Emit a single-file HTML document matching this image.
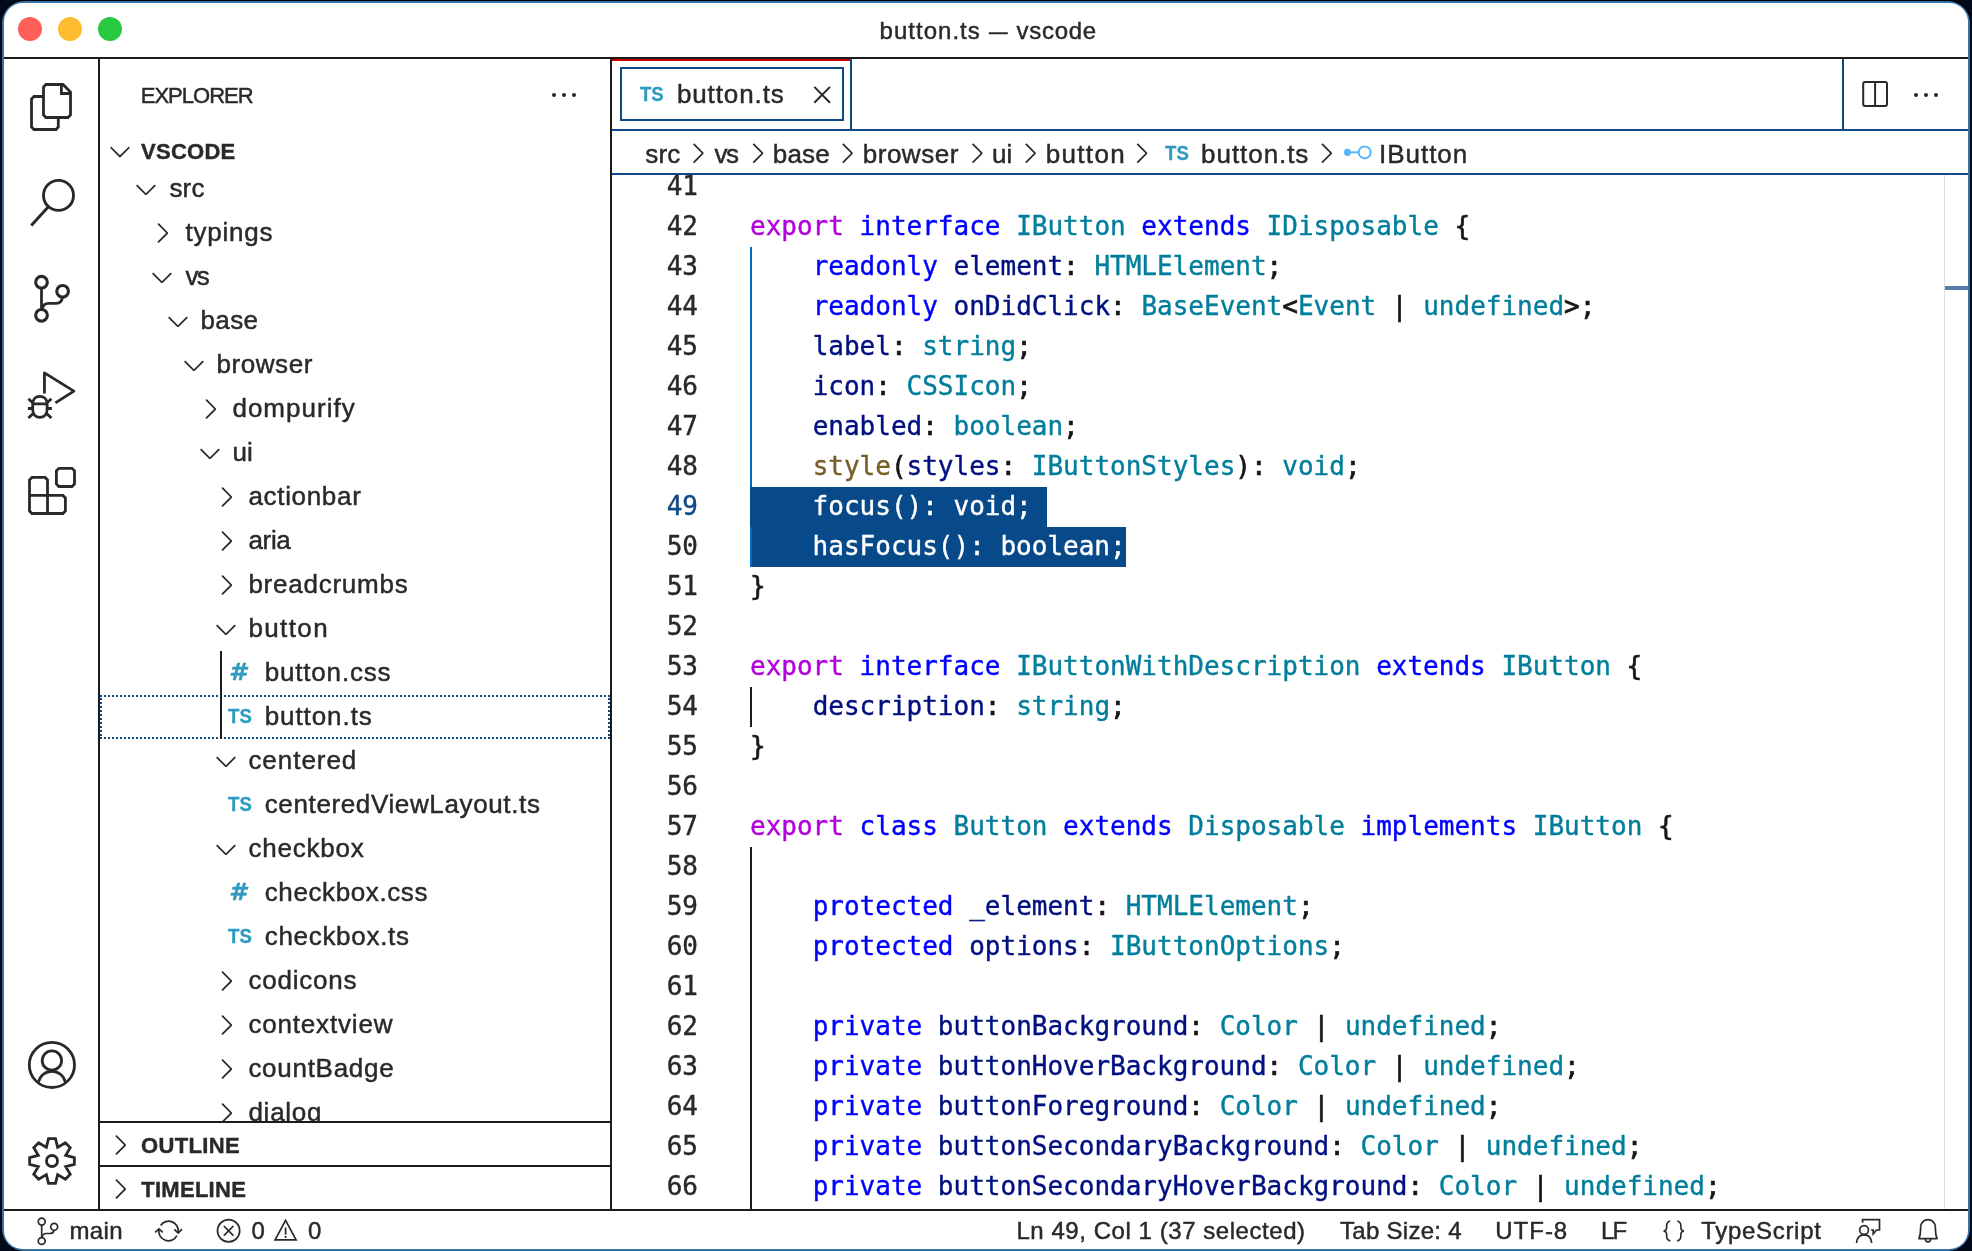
<!DOCTYPE html>
<html lang="en">
<head>
<meta charset="utf-8">
<title>button.ts — vscode</title>
<style>
html,body{margin:0;padding:0;width:1972px;height:1251px;overflow:hidden;}
body{width:1972px;height:1251px;overflow:hidden;background:#020b1a;position:relative;
  font-family:"Liberation Sans","DejaVu Sans",sans-serif;color:#292929;}
*{box-sizing:border-box;}
#winb{position:absolute;left:1.3px;top:0.3px;width:1969.4px;height:1250.7px;border-radius:21px;background:#000;}
#win{position:absolute;left:2px;top:1px;width:1968px;height:1250px;border-radius:22px;background:#3574ab;}
#wini{position:absolute;left:2px;top:2px;width:1964px;height:1246px;border-radius:18.5px;background:#fff;overflow:hidden;}
/* everything inside #inner uses page coordinates */
#inner{position:absolute;left:-4px;top:-3px;width:1972px;height:1251px;will-change:transform;}
.a{position:absolute;}
.t{position:absolute;white-space:pre;-webkit-text-stroke:0.45px;}
.bk{position:absolute;background:#1b1b1b;}
.bl{position:absolute;background:#0f4a85;}
.tl{position:absolute;top:17px;width:24px;height:24px;border-radius:50%;}
svg{position:absolute;overflow:visible;}
.ic{fill:none;stroke:#292929;stroke-width:2.8;}
.sic{fill:none;stroke:#292929;stroke-width:1.7;}
.code{position:absolute;left:750px;height:40px;line-height:40px;font-family:"DejaVu Sans Mono","Liberation Mono",monospace;font-size:26px;white-space:pre;color:#161616;-webkit-text-stroke:0.4px;}
.ln{position:absolute;left:612px;width:86px;-webkit-text-stroke:0.4px;text-align:right;height:40px;line-height:40px;font-family:"DejaVu Sans Mono","Liberation Mono",monospace;font-size:26px;color:#292929;}
.code{-webkit-text-stroke:0.65px}.code span,.code.w{-webkit-text-stroke:0.4px}
.k{color:#b400e0}.b{color:#0000ff}.ty{color:#017e9b}.v{color:#001080}.f{color:#795e26}
.sel{position:absolute;background:#084a89;height:40px;}
.w,.w span{color:#fff}
</style>
</head>
<body>
<div id="winb"></div>
<div id="win"><div id="wini"><div id="inner">

<div class="bk" style="left:4px;top:57px;width:1964px;height:2px"></div>
<div class="bk" style="left:98px;top:59px;width:2px;height:1150px"></div>
<div class="bk" style="left:610px;top:59px;width:2px;height:1150px"></div>
<div class="bk" style="left:4px;top:1209px;width:1964px;height:2px"></div>
<div class="tl" style="left:18px;background:#fe5f57"></div>
<div class="tl" style="left:58px;background:#febc2e"></div>
<div class="tl" style="left:98px;background:#28c840"></div>
<span class="t" style="left:879.62px;top:17.00px;font-size:24px;line-height:27px;letter-spacing:1.011px;">button.ts</span>
<span class="t" style="left:988.77px;top:17.00px;font-size:24px;line-height:27px;letter-spacing:0.000px;transform:scaleX(0.7771);transform-origin:0 0;">—</span>
<span class="t" style="left:1016.52px;top:17.00px;font-size:24px;line-height:27px;letter-spacing:0.711px;">vscode</span>
<span class="t" style="left:140.72px;top:83.10px;font-size:22px;line-height:25px;letter-spacing:-0.983px;">EXPLORER</span>
<span class="t" style="left:141.10px;top:138.90px;font-size:22px;line-height:25px;letter-spacing:0.253px;font-weight:bold;-webkit-text-stroke:0.4px;">VSCODE</span>
<div class="a" style="left:100px;top:166px;width:510px;height:955px;overflow:hidden"><div class="a" style="left:-100px;top:-166px;width:1972px;height:1251px">
<span class="t" style="left:169.42px;top:172.90px;font-size:26px;line-height:30px;letter-spacing:0.196px;">src</span>
<span class="t" style="left:185.42px;top:216.90px;font-size:26px;line-height:30px;letter-spacing:0.795px;">typings</span>
<span class="t" style="left:185.42px;top:260.90px;font-size:26px;line-height:30px;letter-spacing:-1.650px;">vs</span>
<span class="t" style="left:200.42px;top:304.90px;font-size:26px;line-height:30px;letter-spacing:0.410px;">base</span>
<span class="t" style="left:216.42px;top:348.90px;font-size:26px;line-height:30px;letter-spacing:0.589px;">browser</span>
<span class="t" style="left:232.42px;top:392.90px;font-size:26px;line-height:30px;letter-spacing:1.012px;">dompurify</span>
<span class="t" style="left:232.42px;top:436.90px;font-size:26px;line-height:30px;letter-spacing:0.090px;">ui</span>
<span class="t" style="left:248.42px;top:480.90px;font-size:26px;line-height:30px;letter-spacing:0.681px;">actionbar</span>
<span class="t" style="left:248.42px;top:524.90px;font-size:26px;line-height:30px;letter-spacing:-0.315px;">aria</span>
<span class="t" style="left:248.42px;top:568.90px;font-size:26px;line-height:30px;letter-spacing:0.752px;">breadcrumbs</span>
<span class="t" style="left:248.42px;top:612.90px;font-size:26px;line-height:30px;letter-spacing:1.385px;">button</span>
<span class="t" style="left:229.28px;top:659.40px;font-size:23px;line-height:26px;letter-spacing:0.000px;font-weight:bold;-webkit-text-stroke:0.3px;font-style:oblique;color:#2e9bbf;font-family:'DejaVu Sans','Liberation Sans',sans-serif;transform:scaleX(1.0809);transform-origin:0 0;">#</span>
<span class="t" style="left:264.73px;top:656.90px;font-size:26px;line-height:30px;letter-spacing:0.815px;">button.css</span>
<span class="t" style="left:227.74px;top:704.60px;font-size:20px;line-height:22px;letter-spacing:0.075px;font-weight:bold;-webkit-text-stroke:0.3px;color:#2e9bbf;transform:scaleX(0.93);transform-origin:0 0;">TS</span>
<span class="t" style="left:264.73px;top:700.90px;font-size:26px;line-height:30px;letter-spacing:0.914px;">button.ts</span>
<span class="t" style="left:248.42px;top:744.90px;font-size:26px;line-height:30px;letter-spacing:0.961px;">centered</span>
<span class="t" style="left:227.74px;top:792.60px;font-size:20px;line-height:22px;letter-spacing:0.075px;font-weight:bold;-webkit-text-stroke:0.3px;color:#2e9bbf;transform:scaleX(0.93);transform-origin:0 0;">TS</span>
<span class="t" style="left:264.73px;top:788.90px;font-size:26px;line-height:30px;letter-spacing:0.629px;">centeredViewLayout.ts</span>
<span class="t" style="left:248.42px;top:832.90px;font-size:26px;line-height:30px;letter-spacing:0.773px;">checkbox</span>
<span class="t" style="left:229.28px;top:879.40px;font-size:23px;line-height:26px;letter-spacing:0.000px;font-weight:bold;-webkit-text-stroke:0.3px;font-style:oblique;color:#2e9bbf;font-family:'DejaVu Sans','Liberation Sans',sans-serif;transform:scaleX(1.0809);transform-origin:0 0;">#</span>
<span class="t" style="left:264.73px;top:876.90px;font-size:26px;line-height:30px;letter-spacing:0.608px;">checkbox.css</span>
<span class="t" style="left:227.74px;top:924.60px;font-size:20px;line-height:22px;letter-spacing:0.075px;font-weight:bold;-webkit-text-stroke:0.3px;color:#2e9bbf;transform:scaleX(0.93);transform-origin:0 0;">TS</span>
<span class="t" style="left:264.73px;top:920.90px;font-size:26px;line-height:30px;letter-spacing:0.696px;">checkbox.ts</span>
<span class="t" style="left:248.42px;top:964.90px;font-size:26px;line-height:30px;letter-spacing:0.776px;">codicons</span>
<span class="t" style="left:248.42px;top:1008.90px;font-size:26px;line-height:30px;letter-spacing:0.819px;">contextview</span>
<span class="t" style="left:248.42px;top:1052.90px;font-size:26px;line-height:30px;letter-spacing:0.714px;">countBadge</span>
<span class="t" style="left:248.42px;top:1096.90px;font-size:26px;line-height:30px;letter-spacing:0.743px;">dialog</span>
<svg style="left:0;top:0" width="1972" height="1251" viewBox="0 0 1972 1251"><path d="M7.976 10.072l4.357-4.357.62.618L8.284 11h-.618L3 6.333l.619-.618 4.357 4.357z" fill="#292929" transform="translate(130 173) scale(2)"/><path d="M10.072 8.024L5.715 3.667l.618-.62L11 7.716v.618L6.333 13l-.618-.619 4.357-4.357z" fill="#292929" transform="translate(146 217) scale(2)"/><path d="M7.976 10.072l4.357-4.357.62.618L8.284 11h-.618L3 6.333l.619-.618 4.357 4.357z" fill="#292929" transform="translate(146 261) scale(2)"/><path d="M7.976 10.072l4.357-4.357.62.618L8.284 11h-.618L3 6.333l.619-.618 4.357 4.357z" fill="#292929" transform="translate(162 305) scale(2)"/><path d="M7.976 10.072l4.357-4.357.62.618L8.284 11h-.618L3 6.333l.619-.618 4.357 4.357z" fill="#292929" transform="translate(178 349) scale(2)"/><path d="M10.072 8.024L5.715 3.667l.618-.62L11 7.716v.618L6.333 13l-.618-.619 4.357-4.357z" fill="#292929" transform="translate(194 393) scale(2)"/><path d="M7.976 10.072l4.357-4.357.62.618L8.284 11h-.618L3 6.333l.619-.618 4.357 4.357z" fill="#292929" transform="translate(194 437) scale(2)"/><path d="M10.072 8.024L5.715 3.667l.618-.62L11 7.716v.618L6.333 13l-.618-.619 4.357-4.357z" fill="#292929" transform="translate(210 481) scale(2)"/><path d="M10.072 8.024L5.715 3.667l.618-.62L11 7.716v.618L6.333 13l-.618-.619 4.357-4.357z" fill="#292929" transform="translate(210 525) scale(2)"/><path d="M10.072 8.024L5.715 3.667l.618-.62L11 7.716v.618L6.333 13l-.618-.619 4.357-4.357z" fill="#292929" transform="translate(210 569) scale(2)"/><path d="M7.976 10.072l4.357-4.357.62.618L8.284 11h-.618L3 6.333l.619-.618 4.357 4.357z" fill="#292929" transform="translate(210 613) scale(2)"/><path d="M7.976 10.072l4.357-4.357.62.618L8.284 11h-.618L3 6.333l.619-.618 4.357 4.357z" fill="#292929" transform="translate(210 745) scale(2)"/><path d="M7.976 10.072l4.357-4.357.62.618L8.284 11h-.618L3 6.333l.619-.618 4.357 4.357z" fill="#292929" transform="translate(210 833) scale(2)"/><path d="M10.072 8.024L5.715 3.667l.618-.62L11 7.716v.618L6.333 13l-.618-.619 4.357-4.357z" fill="#292929" transform="translate(210 965) scale(2)"/><path d="M10.072 8.024L5.715 3.667l.618-.62L11 7.716v.618L6.333 13l-.618-.619 4.357-4.357z" fill="#292929" transform="translate(210 1009) scale(2)"/><path d="M10.072 8.024L5.715 3.667l.618-.62L11 7.716v.618L6.333 13l-.618-.619 4.357-4.357z" fill="#292929" transform="translate(210 1053) scale(2)"/><path d="M10.072 8.024L5.715 3.667l.618-.62L11 7.716v.618L6.333 13l-.618-.619 4.357-4.357z" fill="#292929" transform="translate(210 1097) scale(2)"/></svg>
</div></div>
<div class="a" style="left:100px;top:695px;width:510px;height:44px;border:2px dotted #0f4a85"></div>
<div class="bk" style="left:220px;top:651px;width:2px;height:88px"></div>
<div class="bk" style="left:100px;top:1121px;width:510px;height:2px"></div>
<div class="bk" style="left:100px;top:1165px;width:510px;height:2px"></div>
<span class="t" style="left:141.10px;top:1133.10px;font-size:22px;line-height:25px;letter-spacing:0.337px;font-weight:bold;-webkit-text-stroke:0.4px;">OUTLINE</span>
<span class="t" style="left:141.20px;top:1177.10px;font-size:22px;line-height:25px;letter-spacing:0.287px;font-weight:bold;-webkit-text-stroke:0.4px;">TIMELINE</span>
<div class="a" style="left:612px;top:59px;width:238px;height:2px;background:#cb0000"></div>
<div class="bl" style="left:850px;top:59px;width:2px;height:70px"></div>
<div class="bl" style="left:612px;top:129px;width:1356px;height:2px"></div>
<div class="bl" style="left:1842px;top:59px;width:2px;height:70px"></div>
<div class="a" style="left:620px;top:67px;width:224px;height:54px;border:2px solid #0f4a85"></div>
<span class="t" style="left:639.94px;top:82.90px;font-size:20px;line-height:22px;letter-spacing:-0.140px;font-weight:bold;-webkit-text-stroke:0.3px;color:#2e9bbf;transform:scaleX(0.93);transform-origin:0 0;">TS</span>
<span class="t" style="left:676.93px;top:78.90px;font-size:26px;line-height:30px;letter-spacing:0.889px;">button.ts</span>
<div class="bl" style="left:612px;top:173px;width:1356px;height:2px"></div>
<span class="t" style="left:645.23px;top:138.80px;font-size:26px;line-height:30px;letter-spacing:0.196px;">src</span>
<span class="t" style="left:714.43px;top:138.80px;font-size:26px;line-height:30px;letter-spacing:-1.350px;">vs</span>
<span class="t" style="left:772.73px;top:138.80px;font-size:26px;line-height:30px;letter-spacing:0.210px;">base</span>
<span class="t" style="left:862.73px;top:138.80px;font-size:26px;line-height:30px;letter-spacing:0.523px;">browser</span>
<span class="t" style="left:992.02px;top:138.80px;font-size:26px;line-height:30px;letter-spacing:0.090px;">ui</span>
<span class="t" style="left:1045.72px;top:138.80px;font-size:26px;line-height:30px;letter-spacing:1.325px;">button</span>
<span class="t" style="left:1201.12px;top:138.80px;font-size:26px;line-height:30px;letter-spacing:0.939px;">button.ts</span>
<span class="t" style="left:1379.02px;top:138.80px;font-size:26px;line-height:30px;letter-spacing:0.970px;">IButton</span>
<span class="t" style="left:1164.84px;top:142.40px;font-size:20px;line-height:22px;letter-spacing:0.075px;font-weight:bold;-webkit-text-stroke:0.3px;color:#2e9bbf;transform:scaleX(0.93);transform-origin:0 0;">TS</span>
<div class="a" style="left:612px;top:175px;width:1356px;height:1034px;overflow:hidden"><div class="a" style="left:-612px;top:-175px;width:1972px;height:1251px">
<div class="sel" style="left:750px;top:487px;width:297.4px"></div>
<div class="sel" style="left:750px;top:527px;width:375.7px"></div>
<div class="a" style="left:750px;top:247px;width:2px;height:240px;background:#0069cc"></div>
<div class="a" style="left:750px;top:527px;width:2px;height:40px;background:#0069cc"></div>
<div class="bk" style="left:750px;top:687px;width:2px;height:40px"></div>
<div class="bk" style="left:750px;top:847px;width:2px;height:380px"></div>
<div class="ln" style="top:166px;">41</div>
<div class="ln" style="top:206px;">42</div>
<div class="code" style="top:206px"><span class="k">export</span> <span class="b">interface</span> <span class="ty">IButton</span> <span class="b">extends</span> <span class="ty">IDisposable</span> {</div>
<div class="ln" style="top:246px;">43</div>
<div class="code" style="top:246px">    <span class="b">readonly</span> <span class="v">element</span>: <span class="ty">HTMLElement</span>;</div>
<div class="ln" style="top:286px;">44</div>
<div class="code" style="top:286px">    <span class="b">readonly</span> <span class="v">onDidClick</span>: <span class="ty">BaseEvent</span>&lt;<span class="ty">Event</span> | <span class="ty">undefined</span>&gt;;</div>
<div class="ln" style="top:326px;">45</div>
<div class="code" style="top:326px">    <span class="v">label</span>: <span class="ty">string</span>;</div>
<div class="ln" style="top:366px;">46</div>
<div class="code" style="top:366px">    <span class="v">icon</span>: <span class="ty">CSSIcon</span>;</div>
<div class="ln" style="top:406px;">47</div>
<div class="code" style="top:406px">    <span class="v">enabled</span>: <span class="ty">boolean</span>;</div>
<div class="ln" style="top:446px;">48</div>
<div class="code" style="top:446px">    <span class="f">style</span>(<span class="v">styles</span>: <span class="ty">IButtonStyles</span>): <span class="ty">void</span>;</div>
<div class="ln" style="top:486px;color:#0f4a85;">49</div>
<div class="code w" style="top:486px">    focus(): void;</div>
<div class="ln" style="top:526px;">50</div>
<div class="code w" style="top:526px">    hasFocus(): boolean;</div>
<div class="ln" style="top:566px;">51</div>
<div class="code" style="top:566px">}</div>
<div class="ln" style="top:606px;">52</div>
<div class="ln" style="top:646px;">53</div>
<div class="code" style="top:646px"><span class="k">export</span> <span class="b">interface</span> <span class="ty">IButtonWithDescription</span> <span class="b">extends</span> <span class="ty">IButton</span> {</div>
<div class="ln" style="top:686px;">54</div>
<div class="code" style="top:686px">    <span class="v">description</span>: <span class="ty">string</span>;</div>
<div class="ln" style="top:726px;">55</div>
<div class="code" style="top:726px">}</div>
<div class="ln" style="top:766px;">56</div>
<div class="ln" style="top:806px;">57</div>
<div class="code" style="top:806px"><span class="k">export</span> <span class="b">class</span> <span class="ty">Button</span> <span class="b">extends</span> <span class="ty">Disposable</span> <span class="b">implements</span> <span class="ty">IButton</span> {</div>
<div class="ln" style="top:846px;">58</div>
<div class="ln" style="top:886px;">59</div>
<div class="code" style="top:886px">    <span class="b">protected</span> <span class="v">_element</span>: <span class="ty">HTMLElement</span>;</div>
<div class="ln" style="top:926px;">60</div>
<div class="code" style="top:926px">    <span class="b">protected</span> <span class="v">options</span>: <span class="ty">IButtonOptions</span>;</div>
<div class="ln" style="top:966px;">61</div>
<div class="ln" style="top:1006px;">62</div>
<div class="code" style="top:1006px">    <span class="b">private</span> <span class="v">buttonBackground</span>: <span class="ty">Color</span> | <span class="ty">undefined</span>;</div>
<div class="ln" style="top:1046px;">63</div>
<div class="code" style="top:1046px">    <span class="b">private</span> <span class="v">buttonHoverBackground</span>: <span class="ty">Color</span> | <span class="ty">undefined</span>;</div>
<div class="ln" style="top:1086px;">64</div>
<div class="code" style="top:1086px">    <span class="b">private</span> <span class="v">buttonForeground</span>: <span class="ty">Color</span> | <span class="ty">undefined</span>;</div>
<div class="ln" style="top:1126px;">65</div>
<div class="code" style="top:1126px">    <span class="b">private</span> <span class="v">buttonSecondaryBackground</span>: <span class="ty">Color</span> | <span class="ty">undefined</span>;</div>
<div class="ln" style="top:1166px;">66</div>
<div class="code" style="top:1166px">    <span class="b">private</span> <span class="v">buttonSecondaryHoverBackground</span>: <span class="ty">Color</span> | <span class="ty">undefined</span>;</div>
<div class="a" style="left:1944px;top:175px;width:1px;height:1034px;background:#dedede"></div>
<div class="a" style="left:1945px;top:286px;width:23px;height:4px;background:#577eae"></div>
</div></div>
<span class="t" style="left:69.52px;top:1216.60px;font-size:24px;line-height:27px;letter-spacing:0.326px;">main</span>
<span class="t" style="left:251.42px;top:1216.60px;font-size:24px;line-height:27px;letter-spacing:0.000px;">0</span>
<span class="t" style="left:308.03px;top:1216.60px;font-size:24px;line-height:27px;letter-spacing:0.000px;">0</span>
<span class="t" style="left:1016.43px;top:1216.60px;font-size:24px;line-height:27px;letter-spacing:0.553px;">Ln 49, Col 1 (37 selected)</span>
<span class="t" style="left:1340.02px;top:1216.60px;font-size:24px;line-height:27px;letter-spacing:0.286px;">Tab Size: 4</span>
<span class="t" style="left:1495.32px;top:1216.60px;font-size:24px;line-height:27px;letter-spacing:0.976px;">UTF-8</span>
<span class="t" style="left:1601.02px;top:1216.60px;font-size:24px;line-height:27px;letter-spacing:-1.898px;">LF</span>
<span class="t" style="left:1701.22px;top:1216.60px;font-size:24px;line-height:27px;letter-spacing:0.693px;">TypeScript</span>
<svg style="left:0;top:0" width="1972" height="1251" viewBox="0 0 1972 1251"><g class="ic" stroke-linejoin="miter"><path d="M46 84.5H63L70.5 92V115L68 117.5H46L43.5 115V87Z"/><path d="M61.4 84.5V93.5H70.5"/><path d="M43.5 96.5H34L31.5 99V127L34 129.5H56L58.3 127V117.5"/></g><g class="ic" style="stroke-width:2.9"><circle cx="58.5" cy="195.4" r="15"/><path d="M48.6 206.6L31.3 225.6"/></g><g class="ic"><circle cx="41.5" cy="282.2" r="5.85" style="stroke-width:3.1"/><circle cx="62.6" cy="291.3" r="5.85" style="stroke-width:3.1"/><circle cx="41.5" cy="315.3" r="5.85" style="stroke-width:3.1"/><path d="M41.5 288.2V309.3"/><path d="M62.4 297.3C62 301.5 59 303.4 55.3 303.4H48.6C44.6 303.4 42.6 306 42.1 309.3"/></g><g class="ic"><path d="M44.45 393.4V372.9L73.9 391.1L55.4 402.9" stroke-linejoin="round"/><path d="M32.7 403.9C32.7 399 36 396.4 39.9 396.4C43.8 396.4 47.1 399 47.1 403.9V409.6C47.1 414.2 44 417.3 39.9 417.3C35.8 417.3 32.7 414.2 32.7 409.6Z"/><path d="M32.7 403.9H47.1M28.4 398.8L33 403M27.9 408.5H32.7M28.4 418L33.4 413.4M51.4 398.8L46.8 403M51.9 408.5H47.1M51.4 418L46.4 413.4"/></g><g class="ic" stroke-linejoin="miter"><path d="M58.9 468.3H72L74.5 470.8V484L72 486.5H58.9L56.4 484V470.8Z"/><path d="M29.5 479.9L32 477.4H45L47.5 479.9V495.4H62.9L65.4 497.9V511L62.9 513.5H32L29.5 511Z"/><path d="M29.5 495.4H47.5V513.5"/></g><g class="ic"><circle cx="51.9" cy="1064.9" r="22.6"/><circle cx="51.9" cy="1060.5" r="9.7"/><path d="M38.3 1082.3C40 1075.5 45.5 1071.3 51.9 1071.3C58.3 1071.3 63.8 1075.5 65.5 1082.3"/></g><g class="ic" stroke-linejoin="miter"><path d="M46.34 1147.33L48.54 1138.67L55.46 1138.67L57.66 1147.33L65.35 1142.76L70.24 1147.65L65.67 1155.34L74.33 1157.54L74.33 1164.46L65.67 1166.66L70.24 1174.35L65.35 1179.24L57.66 1174.67L55.46 1183.33L48.54 1183.33L46.34 1174.67L38.65 1179.24L33.76 1174.35L38.33 1166.66L29.67 1164.46L29.67 1157.54L38.33 1155.34L33.76 1147.65L38.65 1142.76Z"/><circle cx="52" cy="1161" r="5.5" style="stroke-width:2.9"/></g><circle cx="554" cy="95" r="2.05" fill="#292929"/><circle cx="564" cy="95" r="2.05" fill="#292929"/><circle cx="574" cy="95" r="2.05" fill="#292929"/><path d="M7.976 10.072l4.357-4.357.62.618L8.284 11h-.618L3 6.333l.619-.618 4.357 4.357z" fill="#292929" transform="translate(104 135.2) scale(2.0)"/><path d="M10.072 8.024L5.715 3.667l.618-.62L11 7.716v.618L6.333 13l-.618-.619 4.357-4.357z" fill="#292929" transform="translate(103.9 1129) scale(2.0)"/><path d="M10.072 8.024L5.715 3.667l.618-.62L11 7.716v.618L6.333 13l-.618-.619 4.357-4.357z" fill="#292929" transform="translate(103.9 1173) scale(2.0)"/><path d="M814.3 86.9L830 102.8M830 86.9L814.3 102.8" stroke="#292929" stroke-width="2" fill="none"/><g fill="none" stroke="#292929" stroke-width="2"><rect x="1863.2" y="82" width="23.8" height="24" rx="1.9"/><path d="M1875.1 82V106"/></g><circle cx="1916" cy="95" r="2.05" fill="#292929"/><circle cx="1926" cy="95" r="2.05" fill="#292929"/><circle cx="1936" cy="95" r="2.05" fill="#292929"/><path d="M10.072 8.024L5.715 3.667l.618-.62L11 7.716v.618L6.333 13l-.618-.619 4.357-4.357z" fill="#292929" transform="translate(681.57 137.2) scale(2.0)"/><path d="M10.072 8.024L5.715 3.667l.618-.62L11 7.716v.618L6.333 13l-.618-.619 4.357-4.357z" fill="#292929" transform="translate(741.2700000000001 137.2) scale(2.0)"/><path d="M10.072 8.024L5.715 3.667l.618-.62L11 7.716v.618L6.333 13l-.618-.619 4.357-4.357z" fill="#292929" transform="translate(830.7700000000001 137.2) scale(2.0)"/><path d="M10.072 8.024L5.715 3.667l.618-.62L11 7.716v.618L6.333 13l-.618-.619 4.357-4.357z" fill="#292929" transform="translate(960.57 137.2) scale(2.0)"/><path d="M10.072 8.024L5.715 3.667l.618-.62L11 7.716v.618L6.333 13l-.618-.619 4.357-4.357z" fill="#292929" transform="translate(1013.7700000000001 137.2) scale(2.0)"/><path d="M10.072 8.024L5.715 3.667l.618-.62L11 7.716v.618L6.333 13l-.618-.619 4.357-4.357z" fill="#292929" transform="translate(1125.27 137.2) scale(2.0)"/><path d="M10.072 8.024L5.715 3.667l.618-.62L11 7.716v.618L6.333 13l-.618-.619 4.357-4.357z" fill="#292929" transform="translate(1309.97 137.2) scale(2.0)"/><circle cx="1347.5" cy="152.3" r="3.6" fill="#5ab6f7"/><path d="M1350 152.3H1359" stroke="#5ab6f7" stroke-width="2"/><circle cx="1364.7" cy="152.4" r="6" fill="none" stroke="#5ab6f7" stroke-width="2"/><g class="sic"><circle cx="41.7" cy="1221.6" r="3.45"/><circle cx="54.2" cy="1226.8" r="3.45"/><circle cx="41.7" cy="1241" r="3.45"/><path d="M41.7 1225.1V1237.5"/><path d="M54 1230.3C53.6 1232.6 52 1233.5 50 1233.5H46C43.7 1233.5 42.4 1235 42.1 1237.5"/></g><g class="sic"><path d="M160.7 1225.5A9.6 9.6 0 0 1 178.2 1232.2"/><path d="M176.9 1235.6A9.6 9.6 0 0 1 158.9 1229.6"/><path d="M174.3 1229.3L178.2 1233L182 1229.1"/><path d="M155.2 1232.4L158.9 1228.9L162.8 1232.4"/></g><g class="sic"><circle cx="228.6" cy="1230.8" r="11.1"/><path d="M223.8 1226L233.4 1235.6M233.4 1226L223.8 1235.6"/></g><g class="sic" stroke-linejoin="miter"><path d="M285.6 1220.4L296.1 1239.8H275.1Z"/><path d="M285.6 1227.6V1234.8M285.6 1236V1238" /></g><g class="sic" style="stroke-width:1.6"><path d="M1670.3 1221C1667.6 1221.8 1666.6 1223.3 1666.6 1226V1228C1666.6 1229.6 1665.7 1230.6 1663.6 1231C1665.7 1231.4 1666.6 1232.4 1666.6 1234V1236C1666.6 1238.7 1667.6 1240.2 1670.3 1241"/><path d="M1677.2 1221C1679.9 1221.8 1680.9 1223.3 1680.9 1226V1228C1680.9 1229.6 1681.8 1230.6 1683.9 1231C1681.8 1231.4 1680.9 1232.4 1680.9 1234V1236C1680.9 1238.7 1679.9 1240.2 1677.2 1241"/></g><g class="sic" stroke-linejoin="miter"><circle cx="1864.1" cy="1230" r="4.4"/><path d="M1856.5 1243C1857 1238 1860 1234.9 1864.1 1234.9C1868.2 1234.9 1871.2 1238 1871.7 1243"/><path d="M1862.6 1222.8V1219.6H1879.5V1230H1876.5L1873.2 1234V1230.2H1871.2"/></g><g class="sic" stroke-linejoin="round"><path d="M1918.9 1238.6C1920.3 1235.6 1920.6 1232.5 1920.6 1229V1227.3C1920.6 1222.8 1923.8 1219.7 1928 1219.7C1932.2 1219.7 1935.4 1222.8 1935.4 1227.3V1229C1935.4 1232.5 1935.7 1235.6 1937.1 1238.6Z"/><path d="M1925.2 1239C1925.4 1240.8 1926.5 1241.9 1928 1241.9C1929.5 1241.9 1930.6 1240.8 1930.8 1239"/></g></svg>
</div></div></div>
</body>
</html>
